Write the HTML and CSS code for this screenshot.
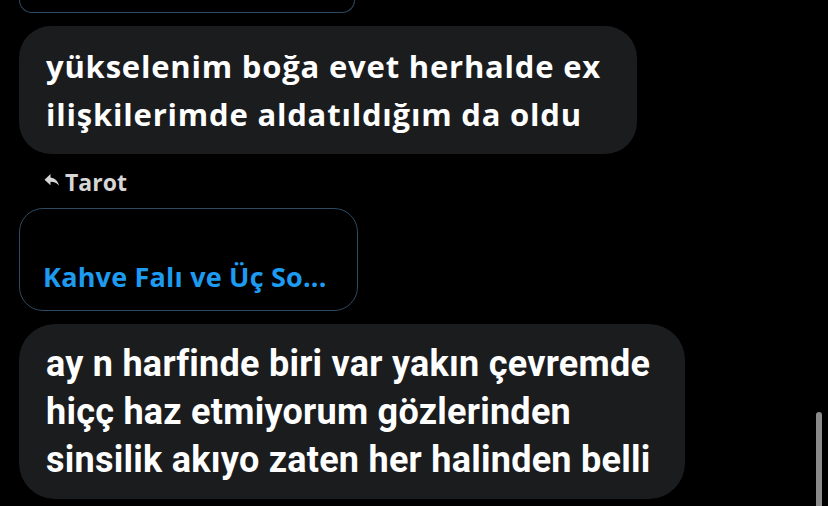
FILE: index.html
```html
<!DOCTYPE html>
<html lang="tr">
<head>
  <meta charset="UTF-8" />
  <meta name="viewport" content="width=device-width, initial-scale=1.0"/>
  <title>Mesajlar</title>
  <link rel="stylesheet" href="styles.css">
</head>
<body>
<div class="chat">
  <div class="card card-cut"></div>

  <div class="bubble bubble-wide">
    yükselenim boğa evet herhalde ex<br>
    ilişkilerimde aldatıldığım da oldu
  </div>

  <div class="reply-to">
    <svg class="reply-icon" viewBox="0 0 24 24" width="18" height="18">
      <path d="M10 8.5V4l-8 7.5 8 7.5v-4.6c5.2 0 8.8 1.7 11.5 5.4C20.4 14.6 17 9.6 10 8.5z" fill="currentColor"/>
    </svg>
    <span>Tarot</span>
  </div>

  <div class="card card-link">
    <span class="link-title">Kahve Falı ve Üç So...</span>
  </div>

  <div class="bubble bubble-narrow">
    ay n harfinde biri var yakın çevremde<br>
    hiçç haz etmiyorum gözlerinden<br>
    sinsilik akıyo zaten her halinden belli
  </div>
</div>

<div class="scroll-thumb"></div>
</body>
</html>
```

FILE: styles.css
```css
* { margin: 0; padding: 0; box-sizing: border-box; }

html, body {
  height: 100%;
  overflow: hidden;
  background: #000;
  font-family: "Open Sans", "Noto Sans", Arial, sans-serif;
  color: #e7e9ea;
}

.chat {
  display: flex;
  flex-direction: column;
  align-items: flex-start;
  padding-left: 19px;
}

.card {
  border: 1px solid #2c4a62;
  border-radius: 24px;
}

.card-cut {
  width: 336px;
  height: 13px;
  border-top: none;
  border-radius: 0 0 24px 24px;
}

.bubble {
  background: #1b1c1e;
  color: #fff;
  font-weight: 700;
  font-size: 31px;
  letter-spacing: 0.8px;
  line-height: 48px;
  border-radius: 32px;
  padding: 16px 20px 16px 27px;
}

.bubble-wide {
  width: 618px;
  margin-top: 13px;
}

.reply-to {
  display: flex;
  align-items: center;
  gap: 4px;
  margin: 14px 0 0 24px;
  font-size: 23px;
  font-weight: 700;
  color: #d6d6d6;
  height: 28px;
}

.reply-icon {
  margin-top: -4px;
}

.card-link {
  width: 339px;
  height: 103px;
  margin-top: 12px;
  display: flex;
  align-items: flex-end;
  padding: 0 0 15px 23px;
}

.link-title {
  color: #1d9bf0;
  font-size: 27px;
  font-weight: 700;
  letter-spacing: 0.2px;
}

.bubble-narrow {
  width: 666px;
  height: 175px;
  margin-top: 13px;
  padding: 16px 20px 14px 27px;
  font-family: "Roboto", "Open Sans", sans-serif;
  font-size: 36px;
  letter-spacing: 0.25px;
  border-radius: 36px;
}

.scroll-thumb {
  position: fixed;
  right: 6px;
  top: 412px;
  width: 6px;
  height: 100px;
  background: #8a8a8a;
  border-radius: 3px 3px 0 0;
}
```
